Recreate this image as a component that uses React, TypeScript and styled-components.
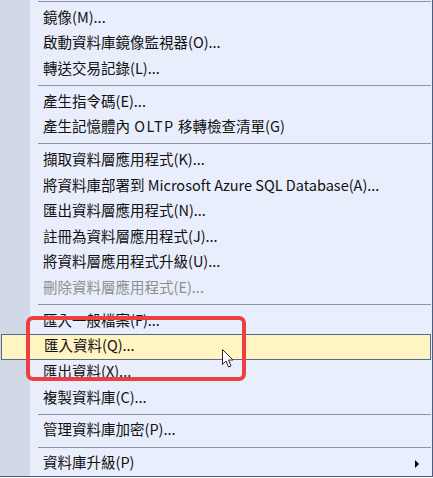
import React from "react";
import styled, { createGlobalStyle } from "styled-components";

const Global = createGlobalStyle`
  html, body { margin: 0; padding: 0; background: #ffffff; }
  body { width: 433px; height: 478px; overflow: hidden; }
`;

const Menu = styled.div`
  position: relative;
  width: 432px;
  height: 476px;
  border-right: 1px solid #4c5c80;
  border-bottom: 1px solid #4c5c80;
  background: linear-gradient(to right, #d3d8e6 0, #d3d8e6 30px, #e9eefc 30px);
  display: flex;
  flex-direction: column;
  font-family: "Noto Sans CJK TC", "Noto Sans", sans-serif;
  font-size: 14.5px;
  color: #111111;
  overflow: hidden;
`;

const Separator = styled.div<{ $first?: boolean }>`
  flex: none;
  height: 1px;
  margin: ${(p) => (p.$first ? "1px" : "3px")} 1px 3px 38px;
  background: #8c94a8;
`;

const Item = styled.div<{ $active?: boolean; $disabled?: boolean }>`
  flex: none;
  box-sizing: border-box;
  height: 25.667px;
  display: flex;
  align-items: center;
  justify-content: space-between;
  padding: 0 12px 0 ${(p) => (p.$active ? "42px" : "43px")};
  margin: 0 ${(p) => (p.$active ? "1px" : "0")};
  white-space: nowrap;
  color: ${(p) => (p.$disabled ? "#8e8e8e" : "#111111")};
  background: ${(p) => (p.$active ? "#fff4c2" : "transparent")};
  border: ${(p) => (p.$active ? "1px solid #56688c" : "none")};
`;

const Label = styled.span`
  line-height: 1;
  transform: translateY(-1px);
`;

const Wide = styled.span`
  letter-spacing: 1.5px;
  margin-left: 1px;
`;

const Arrow = styled.svg`
  flex: none;
  margin-top: 1px;
`;

const Annotation = styled.div`
  position: absolute;
  left: 26px;
  top: 316px;
  width: 220px;
  height: 65px;
  box-sizing: border-box;
  border: 4px solid #ec3f3f;
  border-radius: 7px;
  pointer-events: none;
`;

const Cursor = styled.svg`
  position: absolute;
  left: 221px;
  top: 348px;
`;

type Entry = {
  label?: React.ReactNode;
  sep?: boolean;
  active?: boolean;
  disabled?: boolean;
  sub?: boolean;
};

const entries: Entry[] = [
  { sep: true },
  { label: "鏡像(M)..." },
  { label: "啟動資料庫鏡像監視器(O)..." },
  { label: "轉送交易記錄(L)..." },
  { sep: true },
  { label: "產生指令碼(E)..." },
  {
    label: (
      <>
        產生記憶體內 <Wide>OLTP</Wide> 移轉檢查清單(G)
      </>
    ),
  },
  { sep: true },
  { label: "擷取資料層應用程式(K)..." },
  { label: "將資料庫部署到 Microsoft Azure SQL Database(A)..." },
  { label: "匯出資料層應用程式(N)..." },
  { label: "註冊為資料層應用程式(J)..." },
  { label: "將資料層應用程式升級(U)..." },
  { label: "刪除資料層應用程式(E)...", disabled: true },
  { sep: true },
  { label: "匯入一般檔案(F)..." },
  { label: "匯入資料(Q)...", active: true },
  { label: "匯出資料(X)..." },
  { label: "複製資料庫(C)..." },
  { sep: true },
  { label: "管理資料庫加密(P)..." },
  { sep: true },
  { label: "資料庫升級(P)", sub: true },
];

export default function App() {
  return (
    <>
      <Global />
      <Menu>
        {entries.map((e, i) =>
          e.sep ? (
            <Separator key={i} $first={i === 0} />
          ) : (
            <Item key={i} $active={e.active} $disabled={e.disabled}>
              <Label>{e.label}</Label>
              {e.sub && (
                <Arrow width="5" height="8" viewBox="0 0 5 8">
                  <path d="M0 0 L4 4 L0 8 Z" fill="#000" />
                </Arrow>
              )}
            </Item>
          )
        )}
        <Annotation />
        <Cursor width="13" height="21" viewBox="0 0 13 21">
          <path
            d="M1.5 1.5 L1.5 16.5 L5 13 L7.5 19 L10 18 L7.5 12 L12 12 Z"
            fill="#ffffff"
            stroke="#2a2a2a"
            strokeWidth="1"
            strokeLinejoin="round"
          />
        </Cursor>
      </Menu>
    </>
  );
}
